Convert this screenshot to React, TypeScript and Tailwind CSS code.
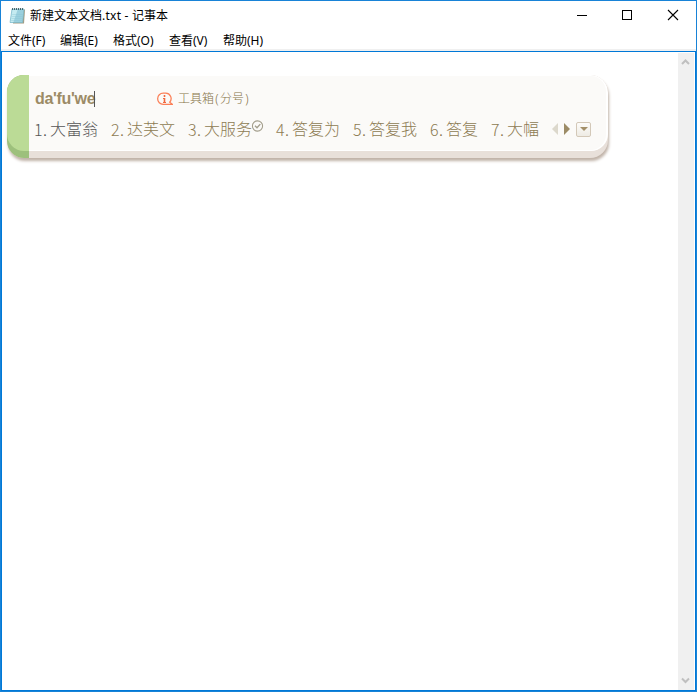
const menus = [
  { label: "文件(F)", width: "w-[38px]" },
  { label: "编辑(E)", width: "w-[39px]" },
  { label: "格式(O)", width: "w-[42px]" },
  { label: "查看(V)", width: "w-[40px]" },
  { label: "帮助(H)", width: "w-[42px]" },
];

const candidates = [
  { text: "大富翁" },
  { text: "达芙文" },
  { text: "大服务", checked: true },
  { text: "答复为" },
  { text: "答复我" },
  { text: "答复" },
  { text: "大幅" },
];

const NotepadIcon = () => (
  <svg width="17" height="18" viewBox="0 0 17 18">
    <path d="M4 2.5h12l-1 14H4z" fill="#a39a80" />
    <path d="M3 2h12l-1.4 13.5H1z" fill="#9bd0de" stroke="#7ab9ca" strokeWidth="0.7" />
    <path d="M3.500 3h5l-4 12H1.600z" fill="#c5ebf1" />
    <path d="M3.200 7.500h10.600M2.800 9.500h10.800M2.500 11.500h10.900M2.200 13.500h11" stroke="#8cc5d5" strokeWidth="0.4" />
    <path d="M3.500 1v2M5.500 1v2M7.500 1v2M9.500 1v2M11.500 1v2M13.500 1v2" stroke="#30474d" strokeWidth="0.8" />
  </svg>
);

const TitleBar = () => (
  <div className="flex h-[29px] items-center pl-2">
    <NotepadIcon />
    <div className="ml-1 w-[150px] whitespace-nowrap text-[12px] leading-4 text-black">
      新建文本文档<span className="tracking-[0.25px]">.txt - </span>记事本
    </div>
    <svg className="mb-[2px] ml-auto mr-4" width="103" height="12" viewBox="0 0 103 12" fill="none" stroke="#000">
      <path d="M0 6.5h10M45.5 1.5h9v9h-9z" shapeRendering="crispEdges" />
      <path d="M91 1l10 10M101 1L91 11" strokeWidth="1.1" />
    </svg>
  </div>
);

const MenuBar = () => (
  <div className="flex h-[19px] gap-[14px] pl-[7px] text-[12px] leading-[21px] text-black">
    {menus.map((menu) => (
      <div key={menu.label} className={`${menu.width} whitespace-nowrap`}>
        {menu.label}
      </div>
    ))}
  </div>
);

const ScrollBar = () => (
  <div className="mt-px flex w-4 flex-col justify-between bg-[#f0f0f0] py-1">
    <svg width="16" height="10" viewBox="0 0 16 10" fill="none" stroke="#bfbfbf" strokeWidth="2">
      <path d="M4 7l3.5-3.5L11 7" />
    </svg>
    <svg width="16" height="10" viewBox="0 0 16 10" fill="none" stroke="#bfbfbf" strokeWidth="2">
      <path d="M4 2.5L7.5 6 11 2.5" />
    </svg>
  </div>
);

const ToolboxIcon = () => (
  <svg width="16" height="14" viewBox="0 0 16 14" fill="none" stroke="#fb8059" strokeWidth="1.3">
    <path d="M11.5 12.3H6.2A5.4 5.4 0 0 1 6.2 1.2h2.2a5.4 5.4 0 0 1 4.3 9l2.6 2.1h-3.8" />
    <path d="M7.5 3v2M7.5 6v5" stroke="#f0683f" strokeWidth="1.6" />
    <path d="M6 6.5h1.5M6 10.5h3" stroke="#f0683f" strokeWidth="1" />
  </svg>
);

const CheckedIcon = () => (
  <svg className="mt-[3px] w-[11px] overflow-visible" width="11" height="12" viewBox="0 0 11 12" fill="none" stroke="#a39e8c">
    <circle cx="5.5" cy="6" r="5.1" strokeWidth="1.1" />
    <path d="M3 5.8l2 2 3.3-3.7" strokeWidth="1.4" />
  </svg>
);

const Pager = () => (
  <div className="ml-[13px] flex items-center">
    <svg width="19" height="12" viewBox="0 0 19 12">
      <path d="M6 0v12L0 6z" fill="#dcd8cc" />
      <path d="M12 0v12l6-6z" fill="#9c8b66" />
    </svg>
    <div className="ml-[5px] flex size-[15px] items-center justify-center rounded-[2px] border border-[#d3c8b8] bg-linear-to-b from-[#fdfcfa] to-[#eeebe4]">
      <svg width="8" height="4" viewBox="0 0 8 4">
        <path d="M0 0h8L4 4z" fill="#a38f69" />
      </svg>
    </div>
  </div>
);

const InputPanel = () => (
  <div className="flex h-[83px] w-[601px] overflow-hidden rounded-l-[17px] rounded-r-[18px] bg-[#e8e0da] shadow-[1px_3px_3px_#c0b3a8]">
    <div className="w-[22px] bg-[#9dc07c]">
      <div className="h-[76px] rounded-bl-[17px] bg-[#bbdb96]" />
    </div>
    <div className="h-[76px] flex-1 rounded-r-[17px] border-y border-r-2 border-white bg-[#fbfaf8] pl-[5px]">
      <div className="flex h-[41px] items-center pt-[5px]">
        <div className="w-[60px] whitespace-nowrap pl-px font-['Liberation_Sans',sans-serif] text-[16px] font-bold leading-5 tracking-[-0.3px] text-[#9c8b66]">
          da'fu'we
        </div>
        <div className="h-4 w-px bg-[#555]" />
        <div className="ml-[62px]">
          <ToolboxIcon />
        </div>
        <div className="ml-[5px] whitespace-nowrap text-[12px] font-light leading-4 text-[#857347]">
          工具箱<span className="inline-block w-[6px] text-center">(</span>分号<span className="inline-block w-[6px] text-center">)</span>
        </div>
      </div>
      <div className="flex h-[24px] whitespace-nowrap text-[16px] font-light leading-6 text-[#8d7b52]">
        <div className="flex gap-[13px]">
          {candidates.map((item, i) => (
            <div key={item.text} className={`flex ${i === 0 ? "text-[#555]" : ""}`}>
              <span className="w-4 font-['Noto_Sans_CJK_SC',sans-serif]">
                <span className="inline-block w-[9px]">{i + 1}</span>.
              </span>
              <span>{item.text}</span>
              {item.checked && <CheckedIcon />}
            </div>
          ))}
        </div>
        <Pager />
      </div>
    </div>
  </div>
);

export default function App() {
  return (
    <div className="flex h-[692px] w-[697px] flex-col border border-[#1883d7] bg-white font-['Noto_Sans','Noto_Sans_CJK_SC',sans-serif]">
      <TitleBar />
      <MenuBar />
      <div className="h-[2px] bg-[#f0f0f0]" />
      <div className="flex flex-1 justify-between border border-[#0078d7] pr-px">
        <div className="pl-[5px] pt-[23px]">
          <InputPanel />
        </div>
        <ScrollBar />
      </div>
    </div>
  );
}
